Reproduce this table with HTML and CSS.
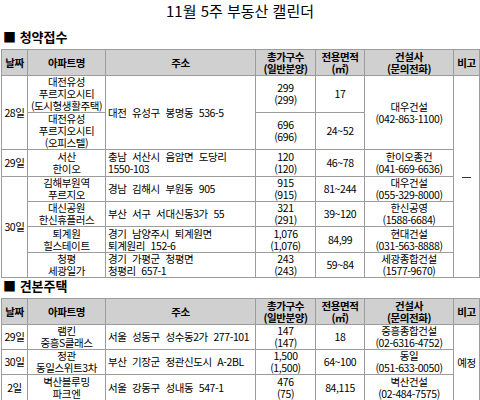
FILE: index.html
```html
<!DOCTYPE html>
<html lang="ko">
<head>
<meta charset="utf-8">
<title>11월 5주 부동산 캘린더</title>
<link rel="stylesheet" href="styles.css">
</head>
<body>
<div class="page">
  <h1 class="title">11월 5주 부동산 캘린더</h1>
  <h2 class="sec">■ 청약접수</h2>
  <table class="cal">
    <colgroup>
      <col class="c-date"><col class="c-apt"><col class="c-addr"><col class="c-units"><col class="c-area"><col class="c-co"><col class="c-note">
    </colgroup>
    <thead>
      <tr class="hd">
        <th>날짜</th><th>아파트명</th><th>주소</th><th>총가구수<br>(일반분양)</th><th>전용면적<br>(㎡)</th><th>건설사<br>(문의전화)</th><th>비고</th>
      </tr>
    </thead>
    <tbody>
      <tr class="r37">
        <td rowspan="2">28일</td>
        <td>대전유성<br>푸르지오시티<br>(도시형생활주택)</td>
        <td rowspan="2" class="addr">대전 유성구 봉명동 536-5</td>
        <td>299<br>(299)</td>
        <td>17</td>
        <td rowspan="2">대우건설<br>(042-863-1100)</td>
        <td rowspan="7"><span class="dash"></span></td>
      </tr>
      <tr class="r36">
        <td>대전유성<br>푸르지오시티<br>(오피스텔)</td>
        <td>696<br>(696)</td>
        <td>24~52</td>
      </tr>
      <tr class="r27">
        <td>29일</td>
        <td>서산<br>한이오</td>
        <td class="addr">충남 서산시 음암면 도당리<br>1550-103</td>
        <td>120<br>(120)</td>
        <td>46~78</td>
        <td>한이오종건<br>(041-669-6636)</td>
      </tr>
      <tr class="r25">
        <td rowspan="4">30일</td>
        <td>김해부원역<br>푸르지오</td>
        <td class="addr">경남 김해시 부원동 905</td>
        <td>915<br>(915)</td>
        <td>81~244</td>
        <td>대우건설<br>(055-329-8000)</td>
      </tr>
      <tr class="r25">
        <td>대신공원<br>한신휴플러스</td>
        <td class="addr">부산 서구 서대신동3가 55</td>
        <td>321<br>(291)</td>
        <td>39~120</td>
        <td>한신공영<br>(1588-6684)</td>
      </tr>
      <tr class="r26">
        <td>퇴계원<br>힐스테이트</td>
        <td class="addr">경기 남양주시 퇴계원면<br>퇴계원리 152-6</td>
        <td>1,076<br>(1,076)</td>
        <td>84,99</td>
        <td>현대건설<br>(031-563-8888)</td>
      </tr>
      <tr class="r25">
        <td>청평<br>세광일가</td>
        <td class="addr">경기 가평군 청평면<br>청평리 657-1</td>
        <td>243<br>(243)</td>
        <td>59~84</td>
        <td>세광종합건설<br>(1577-9670)</td>
      </tr>
    </tbody>
  </table>

  <h2 class="sec sec2">■ 견본주택</h2>
  <table class="cal">
    <colgroup>
      <col class="c-date"><col class="c-apt"><col class="c-addr"><col class="c-units"><col class="c-area"><col class="c-co"><col class="c-note">
    </colgroup>
    <thead>
      <tr class="hd">
        <th>날짜</th><th>아파트명</th><th>주소</th><th>총가구수<br>(일반분양)</th><th>전용면적<br>(㎡)</th><th>건설사<br>(문의전화)</th><th>비고</th>
      </tr>
    </thead>
    <tbody>
      <tr class="r24">
        <td>29일</td>
        <td>램킨<br>중흥S클래스</td>
        <td class="addr">서울 성동구 성수동2가 277-101</td>
        <td>147<br>(147)</td>
        <td>18</td>
        <td>중흥종합건설<br>(02-6316-4752)</td>
        <td rowspan="3">예정</td>
      </tr>
      <tr class="r24">
        <td>30일</td>
        <td>정관<br>동일스위트3차</td>
        <td class="addr">부산 기장군 정관신도시 A-2BL</td>
        <td>1,500<br>(1,500)</td>
        <td>64~100</td>
        <td>동일<br>(051-633-0050)</td>
      </tr>
      <tr class="r26">
        <td>2일</td>
        <td>벽산블루밍<br>파크엔</td>
        <td class="addr">서울 강동구 성내동 547-1</td>
        <td>476<br>(75)</td>
        <td>84,115</td>
        <td>벽산건설<br>(02-484-7575)</td>
      </tr>
    </tbody>
  </table>
</div>
</body>
</html>
```

FILE: styles.css
```css
html, body {
  margin: 0;
  padding: 0;
  background: #ffffff;
}

.page {
  width: 480px;
  font-family: "Noto Sans CJK KR", "Noto Sans", sans-serif;
  color: #000000;
}

.title {
  margin: 0;
  height: 22px;
  line-height: 22px;
  font-size: 15px;
  font-weight: normal;
  text-align: center;
  color: #000000;
}

.sec {
  margin: 7px 0 0 3px;
  height: 16px;
  line-height: 16px;
  font-size: 13px;
  font-weight: bold;
  color: #000000;
}

.sec2 {
  margin-top: 0;
  margin-bottom: 0;
}

.cal {
  margin: 4px 0 0 1px;
  width: 478px;
  table-layout: fixed;
  border-collapse: collapse;
  font-size: 10.5px;
  letter-spacing: -0.4px;
  line-height: 12px;
}

.c-date { width: 26px; }
.c-apt { width: 78px; }
.c-addr { width: 150px; }
.c-units { width: 60px; }
.c-area { width: 49px; }
.c-co { width: 89px; }
.c-note { width: 26px; }

.cal th,
.cal td {
  border: 1px solid #9c9c9c;
  padding: 0;
  text-align: center;
  vertical-align: middle;
  white-space: nowrap;
  overflow: hidden;
}

.cal th {
  background: #d0d0d0;
  font-weight: bold;
  color: #000000;
}

.cal td.addr {
  text-align: left;
  padding-left: 2px;
  word-spacing: 3px;
}

.hd { height: 26px; }
.r37 { height: 37px; }
.r36 { height: 36px; }
.r27 { height: 27px; }
.r26 { height: 26px; }
.r25 { height: 25px; }
.r24 { height: 24px; }

.dash {
  display: inline-block;
  width: 9px;
  height: 1px;
  background: #333333;
  vertical-align: middle;
}
```
